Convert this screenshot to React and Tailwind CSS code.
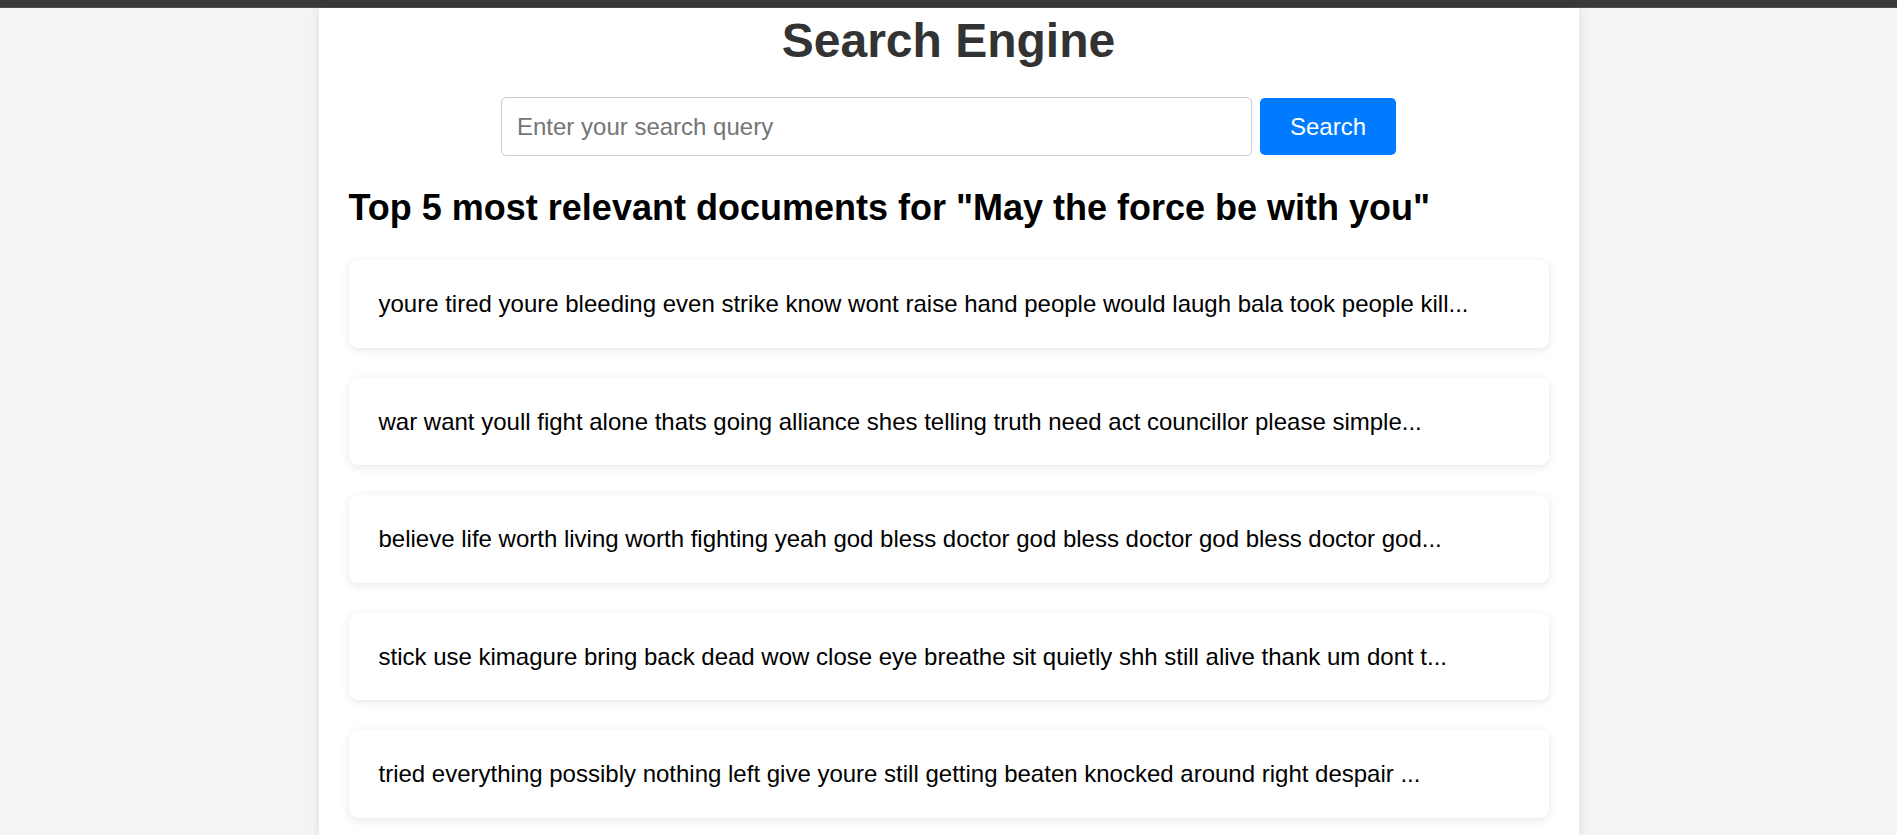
const documents = [
  'youre tired youre bleeding even strike know wont raise hand people would laugh bala took people kill...',
  'war want youll fight alone thats going alliance shes telling truth need act councillor please simple...',
  'believe life worth living worth fighting yeah god bless doctor god bless doctor god bless doctor god...',
  'stick use kimagure bring back dead wow close eye breathe sit quietly shh still alive thank um dont t...',
  'tried everything possibly nothing left give youre still getting beaten knocked around right despair ...',
];

const ResultCard = ({ text }) => (
  <div className="bg-white rounded-[9px] px-[30px] py-[30px] shadow-[0_2px_10px_rgba(0,0,0,0.1)]">
    <p className="text-[24px] leading-[27.6px] text-black">{text}</p>
  </div>
);

const App = () => {
  const query = 'May the force be with you';

  return (
    <div
      className="h-screen flex flex-col overflow-hidden bg-[#f4f4f4]"
      style={{ fontFamily: '"Liberation Sans", Arial, sans-serif' }}
    >
      <div className="h-[8px] shrink-0 bg-[#3a3a3a] border-b border-[#4d4d4d]" />

      <main className="flex-1 mx-auto w-[1260px] bg-white px-[30px] pt-[5px] shadow-[0_0_10px_rgba(0,0,0,0.1)]">
        <h1 className="text-center text-[48px] leading-[55px] font-bold text-[#333]">
          Search Engine
        </h1>

        <form
          className="mt-[29px] flex items-center justify-center gap-[8px]"
          onSubmit={(e) => e.preventDefault()}
        >
          <input
            type="text"
            placeholder="Enter your search query"
            className="w-[751px] h-[59px] px-[15px] border border-[#ccc] rounded-[5px] text-[24px] outline-none placeholder:text-[#757575]"
          />
          <button
            type="submit"
            className="w-[136px] h-[57px] bg-[#007bff] text-white text-[24px] rounded-[5px]"
          >
            Search
          </button>
        </form>

        <h2 className="mt-[31px] text-[36px] leading-[41px] font-bold text-black">
          Top 5 most relevant documents for "{query}"
        </h2>

        <div className="mt-[32px] flex flex-col gap-[30px]">
          {documents.map((doc, i) => (
            <ResultCard key={i} text={doc} />
          ))}
        </div>
      </main>
    </div>
  );
};

export default App;
